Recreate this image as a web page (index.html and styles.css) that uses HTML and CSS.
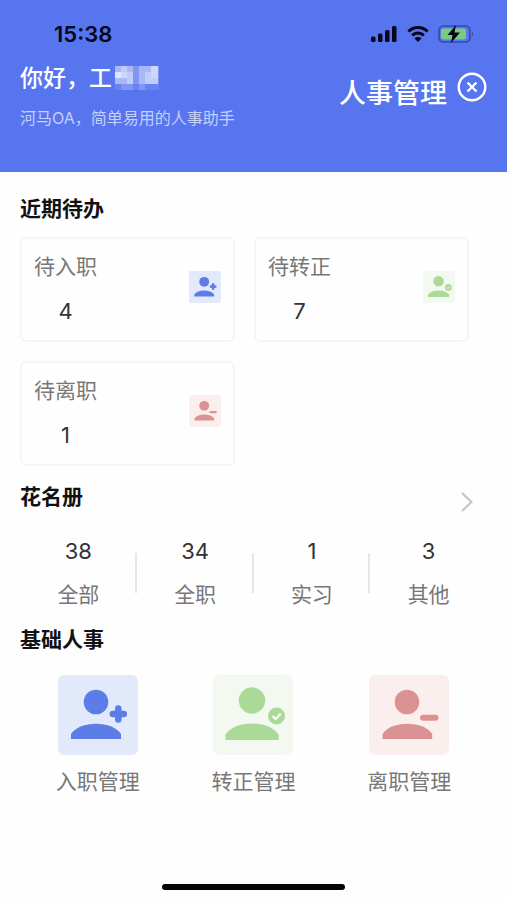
FILE: index.html
```html
<!DOCTYPE html>
<html lang="zh-CN">
<head>
<meta charset="utf-8">
<meta name="viewport" content="width=device-width, initial-scale=1">
<title>人事管理</title>
<link rel="stylesheet" href="styles.css">
</head>
<body>
<svg class="defs" aria-hidden="true">
  <symbol id="person-add" viewBox="0 0 80 80">
    <circle cx="38" cy="27" r="12.3"/>
    <path d="M13 64V59C18 52 27 48.700 38 48.700S58 52 63 59V64Z"/>
    <path d="M60.300 33.500V44.500M54.800 39H65.800" fill="none" stroke="currentColor" stroke-width="6.500" stroke-linecap="round"/>
  </symbol>
  <symbol id="person-check" viewBox="0 0 80 80">
    <circle cx="39" cy="25.500" r="13.200"/>
    <path d="M12.500 65V59.500C18 52 27 48.500 39 48.500S60 52 65.700 59.500V65Z"/>
    <circle cx="63.500" cy="41" r="8.500"/>
    <path d="M59.500 41L62.600 44L67.800 38.700" fill="none" stroke="#f3f9f1" stroke-width="2.400"/>
  </symbol>
  <symbol id="person-remove" viewBox="0 0 80 80">
    <circle cx="38" cy="27" r="12.300"/>
    <path d="M13.500 64V59C18.500 52 27 48.700 38.300 48.700S58.500 52 63.200 59V64Z"/>
    <path d="M54 42.800H66.500" fill="none" stroke="currentColor" stroke-width="6" stroke-linecap="round"/>
  </symbol>
</svg>

<div class="app">
  <header class="header">
    <div class="status">
      <time class="clock">15:38</time>
      <div class="indicators">
        <svg width="27" height="18" viewBox="0 0 27 18" aria-hidden="true">
          <rect x="0" y="11.500" width="4.500" height="5.500" rx="1.500"/>
          <rect x="7" y="8.500" width="4.500" height="8.500" rx="1.500"/>
          <rect x="14" y="5" width="4.500" height="12" rx="1.500"/>
          <rect x="21" y="1" width="4.500" height="16" rx="1.500"/>
        </svg>
        <svg width="22" height="18" viewBox="0 0 22 18" fill="none" stroke="#05071a" stroke-width="3" aria-hidden="true">
          <path d="M1.400 6.500A13.600 13.600 0 0 1 20.600 6.500"/>
          <path d="M5.200 10.400A8.200 8.200 0 0 1 16.800 10.400"/>
          <path d="M7.500 13.400A5 5 0 0 1 14.500 13.400L11 17Z" fill="#05071a" stroke="none"/>
        </svg>
        <svg width="36" height="18" viewBox="0 0 36 18" aria-hidden="true">
          <rect x="1" y="1" width="31" height="16" rx="4.500" fill="none" stroke="#3549a6" stroke-width="1.600"/>
          <rect x="3" y="3.500" width="25" height="11" rx="2.500" fill="#76cd82"/>
          <path d="M34 6.500Q36 9 34 11.500Z" fill="#3549a6"/>
          <path d="M18 0L9.500 10H14.500L13 18L22 7.500H16.500Z"/>
        </svg>
      </div>
    </div>
    <div class="intro">
      <div class="greeting">
        <p class="hello">你好，工<svg class="mosaic" width="44" height="24" viewBox="0 0 44 24" aria-hidden="true">
          <rect width="44" height="24" fill="#8096f3"/>
          <path fill="#a9b8f7" d="M0 0h18v18H0zM24 0h19v18H24z"/>
          <path fill="#c0ccfa" d="M6 0h6v6H6zM12 6h6v12h-6zM30 6h13v12H30z"/>
          <path fill="#dfe6fd" d="M0 6h6v6H0z"/>
          <path fill="#cdd7fc" d="M6 6h6v6H6zM36 0h7v12h-7z"/>
          <path fill="#6a82f1" d="M0 18h6v6H0zM18 18h6v6h-6zM30 18h14v6H30z"/>
        </svg></p>
        <p class="tagline">河马OA，简单易用的人事助手</p>
      </div>
      <div class="heading">
        <h1>人事管理</h1>
        <button class="close" type="button" aria-label="关闭">
          <svg width="30" height="30" viewBox="0 0 30 30" fill="none" stroke="#fff" aria-hidden="true">
            <circle cx="15" cy="15" r="13.300" stroke-width="2.400"/>
            <path d="M10.500 10.500L19.500 19.500M19.500 10.500L10.500 19.500" stroke-width="2.400"/>
          </svg>
        </button>
      </div>
    </div>
  </header>

  <main class="content">
    <section>
      <h2>近期待办</h2>
      <div class="cards">
        <a class="card" href="#join">
          <span class="card-text"><span class="label">待入职</span><span class="number">4</span></span>
          <svg class="tile small blue" aria-hidden="true"><use href="#person-add"/></svg>
        </a>
        <a class="card" href="#regular">
          <span class="card-text"><span class="label">待转正</span><span class="number">7</span></span>
          <svg class="tile small green" aria-hidden="true"><use href="#person-check"/></svg>
        </a>
        <a class="card" href="#leave">
          <span class="card-text"><span class="label">待离职</span><span class="number">1</span></span>
          <svg class="tile small red" aria-hidden="true"><use href="#person-remove"/></svg>
        </a>
      </div>
    </section>

    <section>
      <div class="section-head">
        <h2>花名册</h2>
        <a class="more" href="#roster" aria-label="查看花名册">
          <svg width="14" height="22" viewBox="0 0 14 22" fill="none" stroke="#c4c4c4" stroke-width="2" aria-hidden="true"><path d="M2 2L11.500 11L2 20"/></svg>
        </a>
      </div>
      <div class="stats">
        <div class="stat"><span class="number">38</span><span class="label">全部</span></div>
        <div class="stat"><span class="number">34</span><span class="label">全职</span></div>
        <div class="stat"><span class="number">1</span><span class="label">实习</span></div>
        <div class="stat"><span class="number">3</span><span class="label">其他</span></div>
      </div>
    </section>

    <section>
      <h2>基础人事</h2>
      <nav class="actions">
        <a class="action" href="#join-manage"><svg class="tile blue" aria-hidden="true"><use href="#person-add"/></svg><span class="label">入职管理</span></a>
        <a class="action" href="#regular-manage"><svg class="tile green" aria-hidden="true"><use href="#person-check"/></svg><span class="label">转正管理</span></a>
        <a class="action" href="#leave-manage"><svg class="tile red" aria-hidden="true"><use href="#person-remove"/></svg><span class="label">离职管理</span></a>
      </nav>
    </section>
  </main>

  <div class="home-bar"></div>
</div>
</body>
</html>
```
FILE: styles.css
```css
* {
  box-sizing: border-box;
}

body,
h1,
h2,
p {
  margin: 0;
}

body {
  background: #fefefe;
  color: #333;
  font-family: Inter, "Noto Sans CJK SC", sans-serif;
}

a {
  color: inherit;
  text-decoration: none;
}

svg {
  display: block;
}

.defs {
  display: none;
}

.app {
  display: flex;
  flex-direction: column;
  min-height: 100vh;
}

.header {
  padding: 20px 20px 42px;
  background: #5775ef;
  color: #fff;
}

.status {
  display: flex;
  align-items: center;
  justify-content: space-between;
  height: 28px;
  padding: 0 13px 0 34px;
  color: #05071a;
}

.clock {
  font-size: 22px;
  font-weight: 600;
}

.indicators {
  display: flex;
  gap: 9px;
  fill: #05071a;
}

.intro {
  display: flex;
  justify-content: space-between;
  padding-top: 12px;
}

.hello {
  display: flex;
  align-items: center;
  gap: 3px;
  font-size: 23px;
  font-weight: 500;
  line-height: 36px;
}

.tagline {
  margin-top: 10px;
  color: #c5d0fb;
  font-size: 16px;
  line-height: 24px;
}

.heading {
  display: flex;
  align-items: flex-start;
  gap: 10px;
}

h1 {
  padding-top: 14px;
  font-size: 27px;
  font-weight: 500;
  line-height: 40px;
}

.close {
  margin-top: 12px;
  padding: 0;
  border: 0;
  background: none;
}

.content {
  flex: 1;
  padding: 21px 20px 0;
}

h2 {
  color: #111;
  font-size: 21px;
  font-weight: 700;
  line-height: 32px;
}

.cards {
  display: grid;
  grid-template-columns: 1fr 1fr;
  gap: 19px;
  padding: 12px 18px 15px 0;
}

.card {
  display: flex;
  align-items: flex-start;
  justify-content: space-between;
  padding: 12px 12px 13px;
  border: 2px solid #f5f5f5;
  border-radius: 6px;
}

.card-text {
  display: flex;
  flex-direction: column;
  align-items: center;
  gap: 12px;
}

.label {
  color: #777;
  font-size: 21px;
  line-height: 32px;
}

.number {
  font-size: 22px;
  line-height: 32px;
}

.tile {
  width: 80px;
  height: 80px;
  border-radius: 6px;
  fill: currentColor;
}

.tile.small {
  width: 32px;
  height: 32px;
  margin-top: 20px;
  border-radius: 2px;
}

.blue {
  background: #e1e9fb;
  color: #5c7ce6;
}

.green {
  background: #f3f9f1;
  color: #abd998;
}

.red {
  background: #fbefed;
  color: #db9292;
}

.section-head {
  display: flex;
  align-items: flex-start;
  justify-content: space-between;
}

.more {
  padding: 10px 13px 0;
}

.stats {
  display: grid;
  grid-template-columns: repeat(4, 1fr);
  padding: 22px 0 13px;
}

.stat {
  position: relative;
  display: flex;
  flex-direction: column;
  align-items: center;
  gap: 12px;
}

.stat + .stat::before {
  position: absolute;
  top: 18px;
  left: -2px;
  width: 2px;
  height: 40px;
  background: #e6e6e6;
  content: "";
}

.actions {
  display: grid;
  grid-template-columns: repeat(3, 1fr);
  padding-top: 19px;
}

.action {
  display: flex;
  flex-direction: column;
  align-items: center;
  gap: 11px;
}

.home-bar {
  align-self: center;
  width: 36%;
  height: 6px;
  margin: 10px 0;
  border-radius: 3px;
  background: #050505;
}
```
